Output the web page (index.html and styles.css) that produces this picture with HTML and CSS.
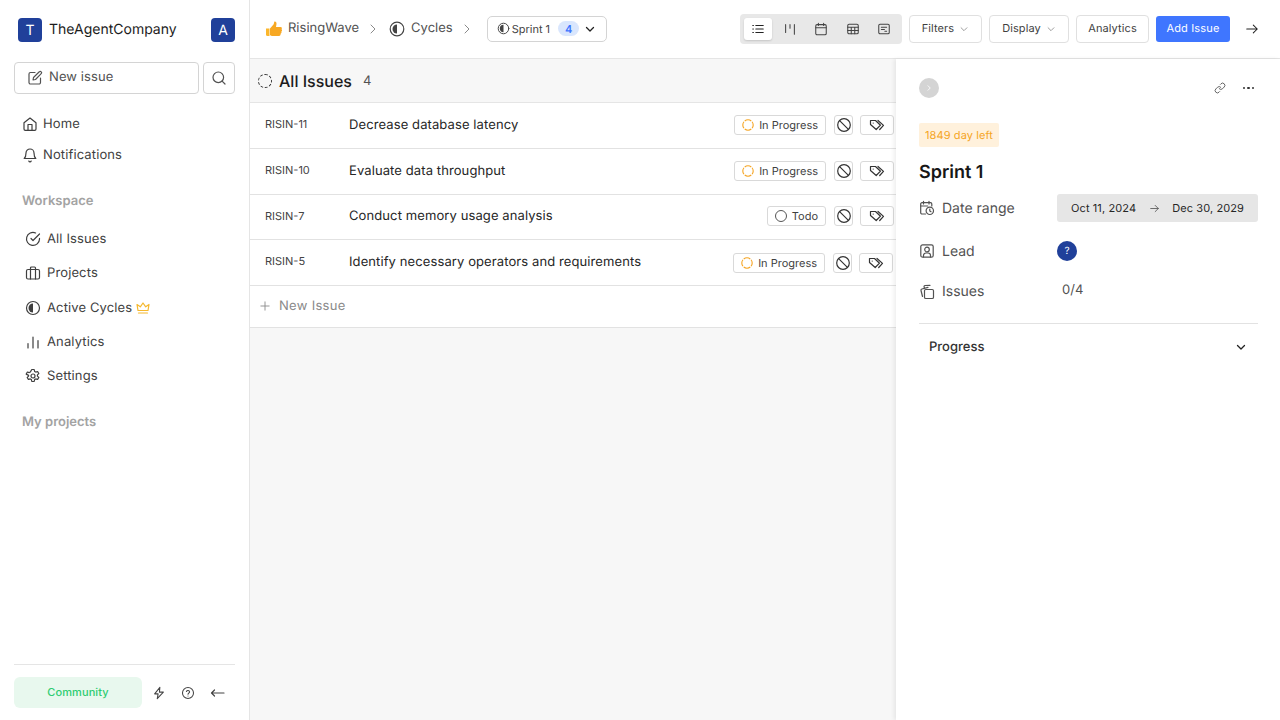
FILE: index.html
```html
<!DOCTYPE html>
<html lang="en">
<head>
    <meta charset="UTF-8">
    <title>RisingWave - Cycles</title>
    <link rel="stylesheet" href="styles.css">
</head>
<body>
<div class="app">

    <aside class="sidebar">
        <div class="brand">
            <span class="avatar">T</span>
            <span class="brand-name">TheAgentCompany</span>
            <span class="avatar avatar-user">A</span>
        </div>

        <div class="new-row">
            <button class="new-issue">
                <svg class="ic" viewBox="0 0 16 16"><path d="M8 2.500H3.500a1.500 1.500 0 0 0-1.500 1.500v8.500a1.500 1.500 0 0 0 1.500 1.500H12a1.500 1.500 0 0 0 1.500-1.500V8"/><path d="M12.300 1.800a1.300 1.300 0 0 1 1.900 1.900L8.500 9.500 6 10l.5-2.500z"/></svg>
                New issue
            </button>
            <button class="search-btn">
                <svg class="ic" viewBox="0 0 16 16"><circle cx="7.300" cy="7.300" r="5.300"/><path d="M14 14l-2.900-2.900"/></svg>
            </button>
        </div>

        <nav class="nav nav-top">
            <a class="nav-item">
                <svg class="ic" viewBox="0 0 16 16"><path d="M2 6.800 8 2l6 4.800V13a1.300 1.300 0 0 1-1.300 1.300H3.300A1.300 1.300 0 0 1 2 13z"/><path d="M6 14.300V8.500h4v5.800"/></svg>
                Home
            </a>
            <a class="nav-item">
                <svg class="ic" viewBox="0 0 16 16"><path d="M4 6a4 4 0 0 1 8 0c0 4 1.800 5.500 1.800 5.500H2.200S4 10 4 6z"/><path d="M6.800 14a1.300 1.300 0 0 0 2.400 0"/></svg>
                Notifications
            </a>
        </nav>

        <div class="section-title">Workspace</div>
        <nav class="nav nav-work">
            <a class="nav-item">
                <svg class="ic" viewBox="0 0 16 16"><path d="M14.500 7.400V8A6.500 6.500 0 1 1 10.600 2"/><path d="M14.500 3 8 9.500l-2-2"/></svg>
                All Issues
            </a>
            <a class="nav-item">
                <svg class="ic" viewBox="0 0 16 16"><rect x="1.500" y="4.500" width="13" height="9.500" rx="1.500"/><path d="M5.500 14V3a1 1 0 0 1 1-1h3a1 1 0 0 1 1 1v11"/></svg>
                Projects
            </a>
            <a class="nav-item nav-cycles">
                <svg class="ic" viewBox="0 0 16 16"><circle cx="8" cy="8" r="6.500"/><path class="fill" d="M8 3.500a4.500 4.500 0 0 0 0 9z"/></svg>
                Active Cycles
                <svg class="crown" viewBox="0 0 14 14"><path d="M2 9.500 1 3.500l3.300 2.300L7 2l2.700 3.800L13 3.500l-1 6z"/><path d="M2.500 12h9"/></svg>
            </a>
            <a class="nav-item">
                <svg class="ic" viewBox="0 0 16 16"><path d="M3 14V9.500M8 14V3M13 14V6.500"/></svg>
                Analytics
            </a>
            <a class="nav-item">
                <svg class="ic" viewBox="0 0 16 16"><circle cx="8" cy="8" r="2"/><path d="M6.800 1.500h2.400l.4 1.900 1.200.7 1.800-.6 1.200 2.100-1.400 1.300v1.200l1.400 1.300-1.200 2.100-1.800-.6-1.200.7-.4 1.900H6.800l-.4-1.900-1.200-.7-1.800.6-1.200-2.100 1.400-1.300V7.400L1.200 6.100l1.200-2.100 1.800.6 1.200-.7z"/></svg>
                Settings
            </a>
        </nav>

        <div class="section-title section-projects">My projects</div>

        <div class="side-foot">
            <span class="community">Community</span>
            <svg class="ic foot-ic" viewBox="0 0 16 16"><path d="M9 1.500 3 9h4l-1 5.500L13 7H8.500z"/></svg>
            <svg class="ic foot-ic" viewBox="0 0 16 16"><circle cx="8" cy="8" r="6.300"/><path d="M6.200 6.300a1.900 1.900 0 0 1 3.600.5c0 1.200-1.800 1.600-1.800 2.600"/><path d="M8 11.400v.1"/></svg>
            <svg class="ic foot-ic" viewBox="0 0 16 16"><path d="M15 8H2.500M5.500 5 2.500 8l3 3"/></svg>
        </div>
    </aside>

    <main class="main">
        <header class="topbar">
            <svg class="thumb" viewBox="0 0 18 18"><path fill="#fbb62c" d="M1 8.500h3.500V16H2.500A1.500 1.500 0 0 1 1 14.500z"/><path fill="#f7a823" d="M5 8.500 8.500 4.500c.5-1 .5-2.300 1-3 1.300-.3 2.200 1 2 2.500L11 7h4.500c1.500 0 1.800 1.500 1 2.200.8.700.7 1.900-.2 2.400.5.800.2 1.800-.7 2.200.2 1-.4 2.200-1.600 2.200H8.500C6.500 16 5 15.500 5 15z"/></svg>
            <span class="crumb">RisingWave</span>
            <svg class="chev-r" viewBox="0 0 12 12"><path d="m4 2 4 4-4 4"/></svg>
            <svg class="ic crumb-ic" viewBox="0 0 16 16"><circle cx="8" cy="8" r="6.800"/><path class="fill" d="M8 3.500a4.500 4.500 0 0 0 0 9z"/></svg>
            <span class="crumb">Cycles</span>
            <svg class="chev-r" viewBox="0 0 12 12"><path d="m4 2 4 4-4 4"/></svg>

            <button class="sprint-btn">
                <svg class="ic sprint-ic" viewBox="0 0 16 16"><circle cx="8" cy="8" r="6.500"/><path class="fill" d="M8 3.500a4.500 4.500 0 0 0 0 9z"/></svg>
                Sprint 1
                <span class="count-pill">4</span>
                <svg class="chev-d dark" viewBox="0 0 12 12"><path d="m2.500 4.500 3.500 3.500 3.500-3.500"/></svg>
            </button>

            <div class="top-right">
                <div class="views">
                    <span class="view active">
                        <svg class="ic" viewBox="0 0 16 16"><path d="M5.500 4H14M5.500 8H14M5.500 12H14M2 4h.8M2 8h.8M2 12h.8"/></svg>
                    </span>
                    <span class="view">
                        <svg class="ic" viewBox="0 0 16 16"><path d="M3 3v9M8 3v4M13 3v11"/></svg>
                    </span>
                    <span class="view">
                        <svg class="ic" viewBox="0 0 16 16"><rect x="2" y="3" width="12" height="11.500" rx="1.500"/><path d="M2 6.500h12M5 1.500V4M11 1.500V4"/></svg>
                    </span>
                    <span class="view">
                        <svg class="ic" viewBox="0 0 16 16"><rect x="2" y="2.500" width="12" height="11" rx="1.500"/><path d="M2 6h12M2 9.700h12M6 6v7.500M10 6v7.500"/></svg>
                    </span>
                    <span class="view">
                        <svg class="ic" viewBox="0 0 16 16"><rect x="2" y="2.500" width="12" height="11" rx="1.500"/><path d="M5 6h6M5 8.500h3.500M9 10.500h2"/></svg>
                    </span>
                </div>
                <button class="btn btn-filters">Filters <svg class="chev-d" viewBox="0 0 12 12"><path d="m2.500 4.500 3.500 3.500 3.500-3.500"/></svg></button>
                <button class="btn btn-display">Display <svg class="chev-d" viewBox="0 0 12 12"><path d="m2.500 4.500 3.500 3.500 3.500-3.500"/></svg></button>
                <button class="btn btn-analytics">Analytics</button>
                <button class="btn-add">Add Issue</button>
                <svg class="ic arrow-out" viewBox="0 0 16 16"><path d="M2 8h12M9.500 3.500 14 8l-4.500 4.500"/></svg>
            </div>
        </header>

        <div class="content">
            <section class="list">
                <div class="list-head">
                    <span class="ring-dashed"></span>
                    <span class="list-title">All Issues</span>
                    <span class="list-count">4</span>
                </div>

                <div class="issue">
                    <span class="issue-id">RISIN-11</span>
                    <span class="issue-name">Decrease database latency</span>
                    <span class="chip"><svg class="ring-progress" viewBox="0 0 12 12"><circle cx="6" cy="6" r="5.200" pathLength="32" stroke-dasharray="7 1" stroke-dashoffset="-4.500"/></svg>In Progress</span>
                    <span class="chip-sq"><svg class="ic" viewBox="0 0 16 16"><circle cx="8" cy="8" r="6.300"/><path d="m3.600 3.600 8.800 8.800"/></svg></span>
                    <span class="chip-tag"><svg class="ic" viewBox="0 0 16 16"><path d="M1.500 3.500h5l5 4.700-4.300 4.300-5.700-5z"/><path d="M9 3.500l5.500 4.900-3.800 4.100"/><path d="M4.200 6v.1"/></svg></span>
                </div>
                <div class="issue">
                    <span class="issue-id">RISIN-10</span>
                    <span class="issue-name">Evaluate data throughput</span>
                    <span class="chip"><svg class="ring-progress" viewBox="0 0 12 12"><circle cx="6" cy="6" r="5.200" pathLength="32" stroke-dasharray="7 1" stroke-dashoffset="-4.500"/></svg>In Progress</span>
                    <span class="chip-sq"><svg class="ic" viewBox="0 0 16 16"><circle cx="8" cy="8" r="6.300"/><path d="m3.600 3.600 8.800 8.800"/></svg></span>
                    <span class="chip-tag"><svg class="ic" viewBox="0 0 16 16"><path d="M1.500 3.500h5l5 4.700-4.300 4.300-5.700-5z"/><path d="M9 3.500l5.500 4.900-3.800 4.100"/><path d="M4.200 6v.1"/></svg></span>
                </div>
                <div class="issue issue-short">
                    <span class="issue-id">RISIN-7</span>
                    <span class="issue-name">Conduct memory usage analysis</span>
                    <span class="chip"><span class="ring-todo"></span>Todo</span>
                    <span class="chip-sq"><svg class="ic" viewBox="0 0 16 16"><circle cx="8" cy="8" r="6.300"/><path d="m3.600 3.600 8.800 8.800"/></svg></span>
                    <span class="chip-tag"><svg class="ic" viewBox="0 0 16 16"><path d="M1.500 3.500h5l5 4.700-4.300 4.300-5.700-5z"/><path d="M9 3.500l5.500 4.900-3.800 4.100"/><path d="M4.200 6v.1"/></svg></span>
                </div>
                <div class="issue issue-shift">
                    <span class="issue-id">RISIN-5</span>
                    <span class="issue-name">Identify necessary operators and requirements</span>
                    <span class="chip"><svg class="ring-progress" viewBox="0 0 12 12"><circle cx="6" cy="6" r="5.200" pathLength="32" stroke-dasharray="7 1" stroke-dashoffset="-4.500"/></svg>In Progress</span>
                    <span class="chip-sq"><svg class="ic" viewBox="0 0 16 16"><circle cx="8" cy="8" r="6.300"/><path d="m3.600 3.600 8.800 8.800"/></svg></span>
                    <span class="chip-tag"><svg class="ic" viewBox="0 0 16 16"><path d="M1.500 3.500h5l5 4.700-4.300 4.300-5.700-5z"/><path d="M9 3.500l5.500 4.900-3.800 4.100"/><path d="M4.200 6v.1"/></svg></span>
                </div>

                <div class="new-line">
                    <svg class="ic plus" viewBox="0 0 16 16"><path d="M8 2.500v11M2.500 8h11"/></svg>
                    New Issue
                </div>
            </section>

            <section class="detail">
                <div class="detail-top">
                    <span class="collapse"><svg viewBox="0 0 12 12"><path d="m4.500 3 3 3-3 3"/></svg></span>
                    <svg class="ic link-ic" viewBox="0 0 16 16"><path d="M7 9a3 3 0 0 0 4.300 0l2.300-2.300a3 3 0 0 0-4.300-4.300L8.500 3.200"/><path d="M9 7a3 3 0 0 0-4.300 0L2.400 9.300a3 3 0 0 0 4.300 4.300l.8-.8"/></svg>
                    <span class="dots"><i></i><i></i><i></i></span>
                </div>
                <span class="days-left">1849 day left</span>
                <h2 class="sprint-title">Sprint 1</h2>

                <div class="prop prop-date">
                    <span class="prop-label">
                        <svg class="ic" viewBox="0 0 16 16"><path d="M6.500 14H3a1.300 1.300 0 0 1-1.300-1.300V4A1.300 1.300 0 0 1 3 2.700h8.500A1.300 1.300 0 0 1 12.800 4v2"/><path d="M1.700 6h7M4.500 1.300V4M10 1.300V4"/><circle cx="10.800" cy="10.800" r="3.700"/><path d="M10.800 9v2l1.200.7"/></svg>
                        Date range
                    </span>
                    <span class="date-box">
                        Oct 11, 2024
                        <svg class="ic date-arrow" viewBox="0 0 16 16"><path d="M2.500 8h11M9 3.500 13.500 8 9 12.500"/></svg>
                        Dec 30, 2029
                    </span>
                </div>
                <div class="prop prop-lead">
                    <span class="prop-label">
                        <svg class="ic" viewBox="0 0 16 16"><rect x="1.800" y="1.800" width="12.400" height="12.400" rx="1.800"/><circle cx="8" cy="6.500" r="2.300"/><path d="M4.500 14v-1.500A2.500 2.500 0 0 1 7 10h2a2.500 2.500 0 0 1 2.500 2.500V14"/></svg>
                        Lead
                    </span>
                    <span class="lead-avatar">?</span>
                </div>
                <div class="prop prop-issues">
                    <span class="prop-label">
                        <svg class="ic" viewBox="0 0 16 16"><rect x="5.500" y="5.500" width="9" height="9" rx="1.300"/><path d="M3.500 12.500 2 6.500a1.300 1.300 0 0 1 .9-1.500L9 3.300"/><path d="M5.500 4 5 2.700A1.200 1.200 0 0 1 6 1.500l5-.2"/></svg>
                        Issues
                    </span>
                    <span class="issues-val">0/4</span>
                </div>

                <div class="progress-row">
                    <span>Progress</span>
                    <svg class="chev-d dark" viewBox="0 0 12 12"><path d="m2.500 4.500 3.500 3.500 3.500-3.500"/></svg>
                </div>
            </section>
        </div>
    </main>

</div>
</body>
</html>
```

FILE: styles.css
```css
* {
    box-sizing: border-box;
}
html, body {
    margin: 0;
    height: 100%;
    overflow: hidden;
}
body {
    font-family: Inter, "Liberation Sans", sans-serif;
    font-size: 13px;
    color: #3f3f3f;
    background: #fff;
    text-rendering: geometricPrecision;
}
button {
    font-family: inherit;
    background: #fff;
    padding: 0;
    text-rendering: inherit;
}
.app {
    display: flex;
    height: 720px;
}

/* shared icon look */
.ic {
    width: 16px;
    height: 16px;
    flex: none;
    fill: none;
    stroke: currentColor;
    stroke-width: 1.2;
    stroke-linecap: round;
    stroke-linejoin: round;
}
.ic .fill {
    fill: currentColor;
    stroke: none;
}
.chev-r, .chev-d {
    width: 12px;
    height: 12px;
    flex: none;
    fill: none;
    stroke: #8a8a8a;
    stroke-width: 1;
    stroke-linecap: round;
    stroke-linejoin: round;
}
.chev-d.dark {
    stroke: #222;
    stroke-width: 1.3;
}

/* sidebar */
.sidebar {
    width: 250px;
    flex: none;
    border-right: 1px solid #e5e5e5;
    display: flex;
    flex-direction: column;
    padding: 18px 14px 12px;
}
.brand {
    display: flex;
    align-items: center;
    padding: 0 0 0 4px;
    height: 24px;
}
.avatar {
    width: 24px;
    height: 24px;
    border-radius: 4px;
    background: #20409a;
    color: #fff;
    font-size: 14px;
    display: flex;
    align-items: center;
    justify-content: center;
}
.brand-name {
    flex: 1;
    margin-left: 7px;
    font-size: 14px;
    font-weight: 400;
    color: #1c1c1c;
    padding-bottom: 1px;
}
.new-row {
    display: flex;
    gap: 4px;
    margin-top: 20px;
}
.new-issue {
    width: 185px;
    height: 32px;
    border: 1px solid #d4d4d4;
    border-radius: 4px;
    display: flex;
    align-items: center;
    gap: 6px;
    padding: 0 0 2px 12px;
    color: #525252;
    font-size: 13px;
    letter-spacing: 0.1px;
}
.new-issue .ic {
    margin-top: 2px;
}
.search-btn {
    width: 32px;
    height: 32px;
    border: 1px solid #d4d4d4;
    border-radius: 4px;
    display: flex;
    align-items: center;
    justify-content: center;
    color: #525252;
}
.nav {
    display: flex;
    flex-direction: column;
}
.nav-item {
    display: flex;
    align-items: center;
    gap: 5px;
    font-size: 13px;
    letter-spacing: 0.12px;
    color: #3f3f3f;
}
.nav-top {
    margin-top: 19px;
    padding-left: 8px;
    gap: 9px;
}
.nav-top .nav-item {
    height: 22px;
}
.section-title {
    font-size: 13px;
    font-weight: 600;
    color: #a3a3a3;
    padding-left: 8px;
    margin-top: 27px;
    line-height: 16px;
}
.nav-work {
    margin-top: 19px;
    padding-left: 11px;
    gap: 12px;
}
.nav-work .nav-item {
    height: 22px;
    gap: 6px;
}
.nav-work .nav-cycles {
    height: 23px;
    padding-top: 1px;
}
.crown {
    width: 14px;
    height: 14px;
    margin-left: -2px;
    fill: none;
    stroke: #f5b82e;
    stroke-width: 1.2;
    stroke-linejoin: round;
    stroke-linecap: round;
}
.section-projects {
    margin-top: 27px;
}
.side-foot {
    margin-top: auto;
    border-top: 1px solid #e5e5e5;
    padding-top: 12px;
    display: flex;
    align-items: center;
    height: 44px;
}
.community {
    width: 128px;
    height: 31px;
    border-radius: 6px;
    background: #e8f8ee;
    color: #2ecc71;
    font-size: 11px;
    font-weight: 500;
    letter-spacing: 0.1px;
    display: flex;
    align-items: center;
    justify-content: center;
    padding-bottom: 2px;
    margin-right: 10px;
}
.foot-ic {
    width: 14px;
    height: 14px;
    color: #444;
    margin-right: 15px;
}
.foot-ic:nth-of-type(2) {
    margin-right: 14px;
}
.foot-ic:last-child {
    width: 16px;
    height: 16px;
    margin-right: 0;
}

/* top bar */
.main {
    flex: 1;
    min-width: 0;
    display: flex;
    flex-direction: column;
}
.topbar {
    height: 59px;
    flex: none;
    border-bottom: 1px solid #e5e5e5;
    display: flex;
    align-items: center;
    padding: 0 21px 1px 15px;
}
.thumb {
    width: 18px;
    height: 18px;
    flex: none;
}
.crumb {
    margin-left: 5px;
    font-size: 13px;
    color: #525252;
    padding-bottom: 2px;
}
.crumb-ic {
    color: #444;
    margin-left: 10px;
    margin-right: 1px;
}
.topbar .chev-r {
    margin-left: 8px;
}
.sprint-btn {
    width: 120px;
    height: 26px;
    margin-left: 14px;
    border: 1px solid #d4d4d4;
    border-radius: 5px;
    display: flex;
    align-items: center;
    padding-left: 9px;
    font-size: 11px;
    color: #444;
    font-weight: 400;
}
.sprint-ic {
    width: 13px;
    height: 13px;
    margin-right: 2px;
}
.count-pill {
    width: 21px;
    height: 15px;
    margin-left: 8px;
    margin-right: 5px;
    border-radius: 8px;
    background: #d9e6fd;
    color: #3f76ff;
    font-weight: 600;
    display: flex;
    align-items: center;
    justify-content: center;
}
.top-right {
    margin-left: auto;
    display: flex;
    align-items: center;
}
.views {
    width: 162px;
    height: 30px;
    border-radius: 4px;
    background: #e8e8e8;
    display: flex;
    align-items: center;
    padding: 0 4px;
    margin-right: 7px;
}
.view {
    width: 28px;
    height: 22px;
    flex: none;
    margin-right: 3.5px;
    border-radius: 3px;
    display: flex;
    align-items: center;
    justify-content: center;
    color: #444;
}
.view:last-child {
    margin-right: 0;
}
.view .ic {
    width: 14px;
    height: 14px;
}
.view.active {
    background: #fff;
    box-shadow: 0 1px 2px rgba(0, 0, 0, 0.15);
    color: #222;
}
.btn {
    height: 28px;
    border: 1px solid #e0e0e0;
    border-radius: 4px;
    display: flex;
    align-items: center;
    justify-content: center;
    gap: 5px;
    padding-bottom: 2px;
    font-size: 11px;
    letter-spacing: 0.1px;
    color: #3f3f3f;
    margin-right: 7px;
}
.btn .chev-d {
    width: 10px;
    height: 10px;
    margin-top: 2px;
}
.btn-filters {
    width: 73px;
}
.btn-display {
    width: 80px;
}
.btn-analytics {
    width: 73px;
}
.btn-add {
    width: 74px;
    height: 26px;
    border: 0;
    border-radius: 3px;
    background: #3f76ff;
    color: #fff;
    font-size: 11px;
    letter-spacing: 0.15px;
    padding-bottom: 2px;
}
.arrow-out {
    width: 14px;
    height: 14px;
    color: #222;
    margin-left: 15px;
}

/* list */
.content {
    flex: 1;
    display: flex;
    min-height: 0;
}
.list {
    flex: 1;
    min-width: 0;
    background: #f7f7f7;
}
.list-head {
    height: 44px;
    border-bottom: 1px solid #e5e5e5;
    display: flex;
    align-items: center;
    padding-left: 8px;
}
.ring-dashed {
    width: 14px;
    height: 14px;
    border: 1.5px dashed #333;
    border-radius: 50%;
}
.list-title {
    margin-left: 7px;
    font-size: 16px;
    font-weight: 500;
    color: #1c1c1c;
}
.list-count {
    margin-left: 11px;
    font-size: 13px;
    color: #525252;
}
.issue {
    height: 46px;
    background: #fff;
    border-bottom: 1px solid #e2e2e2;
    display: flex;
    align-items: center;
    padding: 0 2px 2px 15px;
}
.issue-short {
    height: 45px;
}
.issue-shift {
    padding-right: 3px;
}
.issue-shift .chip, .issue-shift .chip-sq, .issue-shift .chip-tag {
    margin-top: 2px;
}
.issue-id {
    width: 84px;
    font-size: 11px;
    color: #444;
    padding-bottom: 1px;
}
.issue-name {
    flex: 1;
    font-size: 13px;
    color: #262626;
    letter-spacing: 0.1px;
}
.chip {
    height: 20px;
    border: 1px solid #d9d9d9;
    border-radius: 3px;
    display: flex;
    align-items: center;
    gap: 5px;
    padding: 0 7px;
    font-size: 11px;
    color: #3f3f3f;
}
.ring-progress {
    width: 12px;
    height: 12px;
    flex: none;
    fill: none;
    stroke: #f5a524;
    stroke-width: 1.1;
}
.ring-todo {
    width: 12px;
    height: 12px;
    border: 1px solid #555;
    border-radius: 50%;
}
.chip-sq {
    width: 19px;
    height: 20px;
    margin-left: 8px;
    border: 1px solid #d9d9d9;
    border-radius: 3px;
    display: flex;
    align-items: center;
    justify-content: center;
    color: #333;
}
.chip-tag {
    width: 34px;
    height: 20px;
    margin-left: 7px;
    border: 1px solid #d9d9d9;
    border-radius: 3px;
    display: flex;
    align-items: center;
    justify-content: center;
    color: #333;
}
.new-line {
    height: 42px;
    background: #fff;
    border-bottom: 1px solid #e2e2e2;
    display: flex;
    align-items: center;
    gap: 8px;
    padding: 0 0 2px 9px;
    font-size: 13px;
    letter-spacing: 0.3px;
    color: #8a8a8a;
}
.plus {
    width: 12px;
    height: 12px;
    color: #8a8a8a;
}

/* right panel */
.detail {
    width: 384px;
    flex: none;
    background: #fff;
    box-shadow: -2px 0 4px rgba(0, 0, 0, 0.07);
    padding: 0 22px 0 23px;
    display: flex;
    flex-direction: column;
    align-items: flex-start;
}
.detail-top {
    width: 100%;
    height: 20px;
    margin-top: 19px;
    display: flex;
    align-items: center;
}
.collapse {
    width: 20px;
    height: 20px;
    border-radius: 50%;
    background: #d4d4d4;
    display: flex;
    align-items: center;
    justify-content: center;
}
.collapse svg {
    width: 10px;
    height: 10px;
    fill: none;
    stroke: #fff;
    stroke-width: 1;
}
.link-ic {
    width: 12px;
    height: 12px;
    color: #555;
    margin-left: auto;
}
.dots {
    display: flex;
    gap: 2px;
    margin-left: 17px;
    margin-right: 4px;
}
.dots i {
    width: 2.5px;
    height: 2.5px;
    border-radius: 50%;
    background: #333;
}
.days-left {
    margin-top: 25px;
    height: 24px;
    padding: 0 6px 1px;
    border-radius: 2px;
    background: #fff1dc;
    color: #f5a524;
    font-size: 11px;
    display: flex;
    align-items: center;
    letter-spacing: 0.1px;
}
.sprint-title {
    margin: 14px 0 0;
    font-size: 18px;
    line-height: 24px;
    font-weight: 600;
    color: #171717;
}
.prop {
    width: 100%;
    display: flex;
    align-items: center;
}
.prop-label {
    width: 138px;
    display: flex;
    align-items: center;
    gap: 7px;
    font-size: 14px;
    color: #525252;
}
.prop-date {
    margin-top: 9px;
}
.date-box {
    width: 201px;
    height: 28px;
    border-radius: 3px;
    background: #e6e6e6;
    display: flex;
    align-items: center;
    justify-content: space-between;
    padding: 0 14px;
    font-size: 11px;
    color: #262626;
    letter-spacing: 0.1px;
}
.date-arrow {
    width: 11px;
    height: 11px;
    color: #525252;
}
.prop-lead {
    margin-top: 19px;
}
.lead-avatar {
    width: 20px;
    height: 20px;
    border-radius: 50%;
    background: #20409a;
    color: #fff;
    font-size: 10px;
    display: flex;
    align-items: center;
    justify-content: center;
}
.prop-issues {
    margin-top: 22px;
}
.issues-val {
    margin-left: 5px;
    margin-top: -3px;
    font-size: 13px;
    color: #525252;
}
.progress-row {
    width: 100%;
    margin-top: 23px;
    border-top: 1px solid #e2e2e2;
    padding: 15px 11px 0 10px;
    display: flex;
    align-items: center;
    justify-content: space-between;
    font-size: 13px;
    font-weight: 500;
    color: #333;
}
```
